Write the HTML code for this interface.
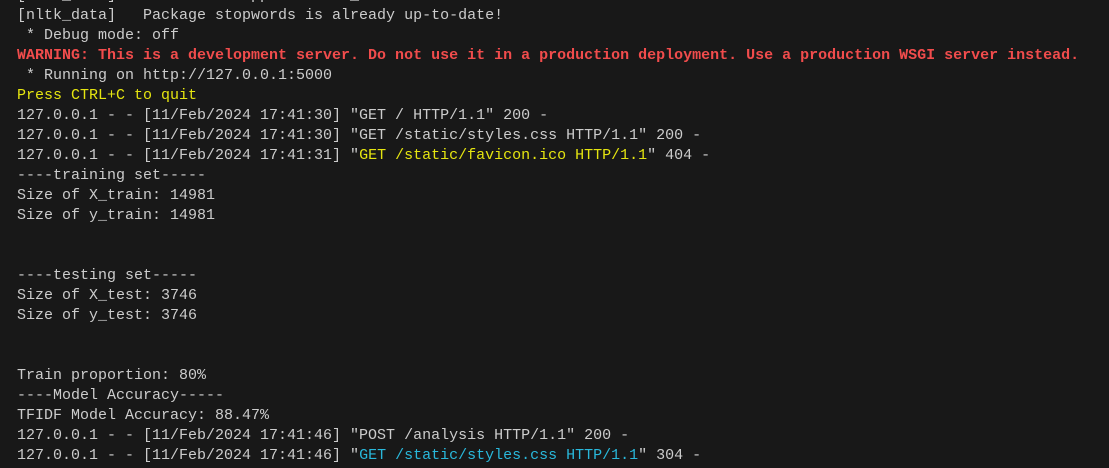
<!DOCTYPE html><html><head><style>
html,body{margin:0;padding:0;width:1109px;height:468px;overflow:hidden;background:#181818}
pre{margin:0;position:absolute;left:17px;top:-14px;font-family:"Liberation Mono",monospace;font-size:15px;line-height:20px;color:#cccccc;white-space:pre}
.r{color:#f14c4c;font-weight:bold}.y{color:#e5e510}.c{color:#29b8db}
</style></head><body><pre>[nltk_data]     C:\Users\appdata\nltk_data...
[nltk_data]   Package stopwords is already up-to-date!
 * Debug mode: off
<span class="r">WARNING: This is a development server. Do not use it in a production deployment. Use a production WSGI server instead.</span>
 * Running on http://127.0.0.1:5000
<span class="y">Press CTRL+C to quit</span>
127.0.0.1 - - [11/Feb/2024 17:41:30] "GET / HTTP/1.1" 200 -
127.0.0.1 - - [11/Feb/2024 17:41:30] "GET /static/styles.css HTTP/1.1" 200 -
127.0.0.1 - - [11/Feb/2024 17:41:31] "<span class="y">GET /static/favicon.ico HTTP/1.1</span>" 404 -
----training set-----
Size of X_train: 14981
Size of y_train: 14981


----testing set-----
Size of X_test: 3746
Size of y_test: 3746


Train proportion: 80%
----Model Accuracy-----
TFIDF Model Accuracy: 88.47%
127.0.0.1 - - [11/Feb/2024 17:41:46] "POST /analysis HTTP/1.1" 200 -
127.0.0.1 - - [11/Feb/2024 17:41:46] "<span class="c">GET /static/styles.css HTTP/1.1</span>" 304 -
</pre></body></html>
